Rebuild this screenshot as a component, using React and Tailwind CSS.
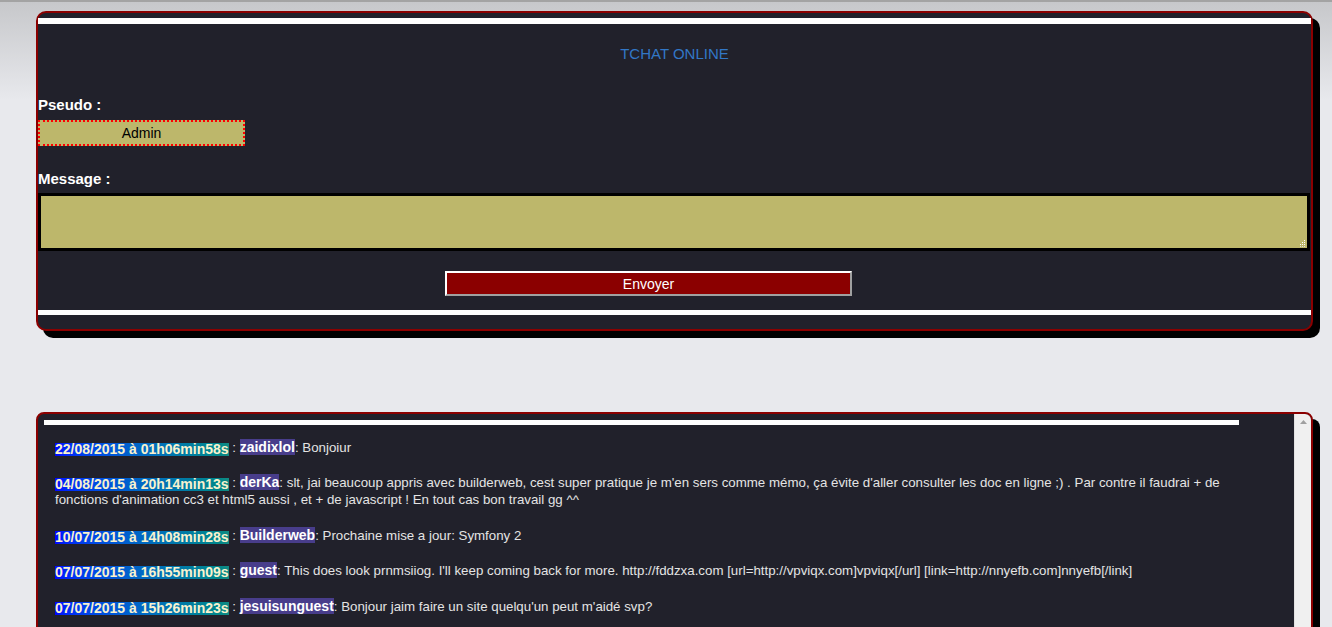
const messages = [
  {
    date: '22/08/2015 à 01h06min58s',
    user: 'zaidixlol',
    text: 'Bonjoiur'
  },
  {
    date: '04/08/2015 à 20h14min13s',
    user: 'derKa',
    text: "slt, jai beaucoup appris avec builderweb, cest super pratique je m'en sers comme mémo, ça évite d'aller consulter les doc en ligne ;) . Par contre il faudrai + de fonctions d'animation cc3 et html5 aussi , et + de javascript ! En tout cas bon travail gg ^^"
  },
  {
    date: '10/07/2015 à 14h08min28s',
    user: 'Builderweb',
    text: 'Prochaine mise a jour: Symfony 2'
  },
  {
    date: '07/07/2015 à 16h55min09s',
    user: 'guest',
    text: "This does look prnmsiiog. I'll keep coming back for more. http://fddzxa.com [url=http://vpviqx.com]vpviqx[/url] [link=http://nnyefb.com]nnyefb[/link]"
  },
  {
    date: '07/07/2015 à 15h26min23s',
    user: 'jesuisunguest',
    text: "Bonjour jaim faire un site quelqu'un peut m'aidé svp?"
  }
]

const App = () => {
  return (
    <div className="h-[627px] overflow-hidden bg-[#e8e9ed] bg-gradient-to-b from-[#c6c7ca] to-[#e8e9ed] bg-[length:100%_100px] bg-no-repeat font-['Liberation_Sans',Arial,sans-serif]">
      <div className="h-[2px] bg-[#a3a3a3]"></div>

      {/* Form panel */}
      <div className="ml-[36px] mt-[9px] w-[1277px] rounded-[10px] border-2 border-[#8b0000] bg-[#21212b] shadow-[7px_7px_0_#000]">
        <div className="mt-[5px] h-[6px] bg-white"></div>
        <h1 className="mt-[21px] text-center text-[15px] leading-[17px] text-[#3277c6]">TCHAT ONLINE</h1>

        <div className="mt-[34px] text-[15px] font-bold leading-[17px] text-white">Pseudo :</div>
        <input
          type="text"
          defaultValue="Admin"
          className="mt-[7px] block h-[26px] w-[207px] border-2 border-dotted border-[#ff0000] bg-[#bdb76b] text-center text-[14px] text-black outline-none"
        />

        <div className="mt-[24px] text-[15px] font-bold leading-[17px] text-white">Message :</div>
        <div className="relative mt-[6px]">
          <textarea className="block h-[58px] w-[1272px] resize-none border-[3px] border-black bg-[#bdb76b] outline-none"></textarea>
          <svg className="absolute bottom-[4px] right-[5px]" width="7" height="7" viewBox="0 0 7 7">
            <rect x="5" y="0" width="1" height="1" fill="#fff" />
            <rect x="3" y="2" width="1" height="1" fill="#fff" />
            <rect x="5" y="2" width="1" height="1" fill="#fff" />
            <rect x="1" y="4" width="1" height="1" fill="#fff" />
            <rect x="3" y="4" width="1" height="1" fill="#fff" />
            <rect x="5" y="4" width="1" height="1" fill="#fff" />
            <rect x="1" y="6" width="1" height="1" fill="#ddd" />
            <rect x="3" y="6" width="1" height="1" fill="#ddd" />
            <rect x="5" y="6" width="1" height="1" fill="#ddd" />
          </svg>
        </div>

        <button className="ml-[407px] mt-[20px] block h-[25px] w-[407px] border-2 border-b-[#a0a0a0] border-l-white border-r-[#a0a0a0] border-t-white bg-[#8b0000] pt-px text-[14px] text-white">
          Envoyer
        </button>

        <div className="mb-[14px] mt-[14px] h-[5px] bg-white"></div>
      </div>

      {/* Messages panel */}
      <div className="ml-[36px] mt-[81px] flex h-[260px] w-[1277px] overflow-hidden rounded-t-[8px] border-2 border-[#8b0000] bg-[#21212b] shadow-[7px_7px_0_#000]">
        <div className="flex-1">
          <div className="ml-[6px] mt-[6px] h-[5px] w-[1195px] bg-white"></div>
          <div className="pl-[17px] pr-[44px] pt-[13.5px]">
            {messages.map((m, i) => (
              <p key={i} className="mb-[18.5px] text-[13.3px] leading-[17px] text-[#e4e4e4]">
                <span className="inline-block h-[13px] bg-gradient-to-r from-[#0000ff] to-[#138a82] align-[-2px] text-[14px] font-bold leading-[13px] text-[#f8f2cf]">
                  {m.date}
                </span>
                {' : '}
                <span className="bg-[#483d8b] text-[14px] font-bold text-white">{m.user}</span>
                : {m.text}
              </p>
            ))}
          </div>
        </div>
        <div className="relative w-[17px] border-l border-[#e2e2e2] bg-[#f0f0f0]">
          <svg className="absolute left-[5px] top-[6px]" width="7" height="4" viewBox="0 0 7 4">
            <path d="M3.5 0 L7 4 L0 4 Z" fill="#a0a0a0" />
          </svg>
        </div>
      </div>
    </div>
  )
}

export default App
